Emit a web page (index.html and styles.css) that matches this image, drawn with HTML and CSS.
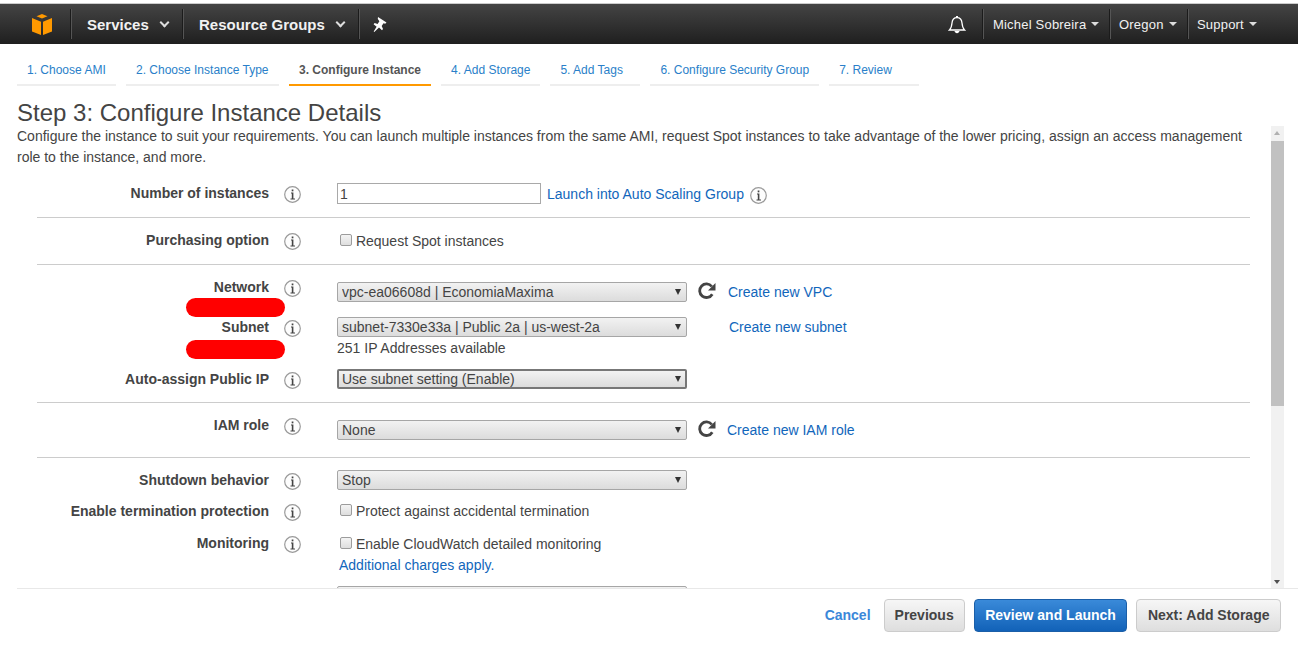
FILE: index.html
```html
<!DOCTYPE html>
<html>
<head>
    <title>Launch Instance Wizard</title>
    <link rel="stylesheet" href="styles.css">
</head>
<body>
    <header class="topbar">
        <div class="nav-item logo">
            <svg width="20" height="21" viewBox="0 0 20 21">
                <path fill="#f90" d="M10 0l5.500 2.300L10 4.600 4.500 2.300z"/>
                <path fill="#f90" d="M0 4l9 3.700V21l-9-3.600z"/>
                <path fill="#f90" d="M20 4l-9 3.700V21l9-3.600z"/>
            </svg>
        </div>
        <div class="nav-item services">Services <span class="chev"></span></div>
        <div class="nav-item groups">Resource Groups <span class="chev"></span></div>
        <div class="nav-item pin">
            <svg width="14" height="15" viewBox="0 0 14 15">
                <path fill="#fff" d="M5 0l8.500 5.500-1.300 1.200-1.700-.4-1.800 2.800 1.300 3-1 1.100-3-2.800L1.300 15 .7 14.400l2.900-4.600-3-2.500 1-1.200 3 .8 1.800-2.600-1.600-2.300z"/>
            </svg>
        </div>
        <div class="nav-right">
            <div class="bell">
                <svg width="18" height="19" viewBox="0 0 18 19">
                    <path fill="none" stroke="#fff" stroke-width="1.300" d="M1.500 15c2-2 2.200-3.500 2.500-7 .3-3.500 2.300-5.300 5-5.300s4.700 1.800 5 5.300c.3 3.500.5 5 2.500 7z"/>
                    <path fill="#fff" d="M6.500 16h5c-.3 1.400-1.200 2.200-2.500 2.200s-2.200-.8-2.500-2.200zM8 1h2v2H8z"/>
                </svg>
            </div>
            <div class="menu user">Michel Sobreira <span class="caret"></span></div>
            <div class="menu region">Oregon <span class="caret"></span></div>
            <div class="menu support">Support <span class="caret"></span></div>
        </div>
    </header>

    <nav class="tabs">
        <a class="tab">1. Choose AMI</a>
        <a class="tab">2. Choose Instance Type</a>
        <a class="tab active">3. Configure Instance</a>
        <a class="tab">4. Add Storage</a>
        <a class="tab">5. Add Tags</a>
        <a class="tab">6. Configure Security Group</a>
        <a class="tab">7. Review</a>
    </nav>

    <h1 class="title">Step 3: Configure Instance Details</h1>

    <div class="pane">
        <main class="form">
            <p class="intro">Configure the instance to suit your requirements. You can launch multiple instances from the same AMI, request Spot instances to take advantage of the lower pricing, assign an access management role to the instance, and more.</p>

            <section class="section s-count">
                <div class="row">
                    <label class="label">Number of instances</label>
                    <svg class="info"><use href="#i"/></svg>
                    <div class="field inline">
                        <input class="text" type="text" value="1">
                        <a class="link">Launch into Auto Scaling Group</a>
                        <svg class="info after"><use href="#i"/></svg>
                    </div>
                </div>
            </section>

            <section class="section s-spot">
                <div class="row">
                    <label class="label">Purchasing option</label>
                    <svg class="info"><use href="#i"/></svg>
                    <div class="field"><span class="check"><input type="checkbox"> Request Spot instances</span></div>
                </div>
            </section>

            <section class="section s-net">
                <div class="row r-network">
                    <label class="label">Network</label>
                    <svg class="info"><use href="#i"/></svg>
                    <div class="field inline">
                        <div class="select"><select><option>vpc-ea06608d | EconomiaMaxima</option></select></div>
                        <svg class="refresh"><use href="#r"/></svg>
                        <a class="link">Create new VPC</a>
                    </div>
                    <span class="blot"></span>
                </div>
                <div class="row r-subnet">
                    <label class="label">Subnet</label>
                    <svg class="info"><use href="#i"/></svg>
                    <div class="field">
                        <div class="inline">
                            <div class="select"><select><option>subnet-7330e33a | Public 2a | us-west-2a</option></select></div>
                            <a class="link subnet-link">Create new subnet</a>
                        </div>
                        <div class="note">251 IP Addresses available</div>
                    </div>
                    <span class="blot"></span>
                </div>
                <div class="row r-public">
                    <label class="label">Auto-assign Public IP</label>
                    <svg class="info"><use href="#i"/></svg>
                    <div class="field"><div class="select focus"><select><option>Use subnet setting (Enable)</option></select></div></div>
                </div>
            </section>

            <section class="section s-iam">
                <div class="row r-iam">
                    <label class="label">IAM role</label>
                    <svg class="info"><use href="#i"/></svg>
                    <div class="field inline">
                        <div class="select"><select><option>None</option></select></div>
                        <svg class="refresh"><use href="#r"/></svg>
                        <a class="link iam-link">Create new IAM role</a>
                    </div>
                </div>
            </section>

            <section class="section s-last">
                <div class="row r-shutdown">
                    <label class="label">Shutdown behavior</label>
                    <svg class="info"><use href="#i"/></svg>
                    <div class="field"><div class="select"><select><option>Stop</option></select></div></div>
                </div>
                <div class="row r-protect">
                    <label class="label">Enable termination protection</label>
                    <svg class="info"><use href="#i"/></svg>
                    <div class="field"><span class="check"><input type="checkbox"> Protect against accidental termination</span></div>
                </div>
                <div class="row r-monitor">
                    <label class="label">Monitoring</label>
                    <svg class="info"><use href="#i"/></svg>
                    <div class="field">
                        <span class="check"><input type="checkbox"> Enable CloudWatch detailed monitoring</span>
                        <a class="link charges">Additional charges apply.</a>
                    </div>
                </div>
                <div class="row r-next">
                    <div class="field next"><div class="select"><select><option>Shared - Run a shared hardware instance</option></select></div></div>
                </div>
            </section>
        </main>
        <div class="scrollbar">
            <span class="arrow up"></span>
            <span class="thumb"></span>
            <span class="arrow down"></span>
        </div>
    </div>

    <footer class="footer">
        <a class="cancel">Cancel</a>
        <button class="btn">Previous</button>
        <button class="btn primary">Review and Launch</button>
        <button class="btn">Next: Add Storage</button>
    </footer>

    <svg class="defs" width="0" height="0">
        <symbol id="i" viewBox="0 0 17 17">
            <circle cx="8.500" cy="8.500" r="7.800" fill="#fdfdfd" stroke="#9a9a9a" stroke-width="1.200"/>
            <rect x="7.700" y="3.500" width="1.700" height="1.800" fill="#444"/>
            <path fill="#444" d="M7 6.500h2.400v6H11v1H6.500v-1h1.300v-5H7z"/>
        </symbol>
        <symbol id="r" viewBox="0 0 18 18">
            <path fill="none" stroke="#444" stroke-width="2.800" d="M14.300 12.200A6.800 6.800 0 1 1 13.800 4.500"/>
            <path fill="#444" d="M17.500 1v7.500H10z"/>
        </symbol>
    </svg>
</body>
</html>
```

FILE: styles.css
```css
* {
    box-sizing: border-box;
}

body {
    margin: 0;
    height: 651px;
    overflow: hidden;
    background: #fff;
    font-family: "Liberation Sans", Arial, sans-serif;
    font-size: 14px;
    color: #444;
}

.defs {
    position: absolute;
}

/* top bar */
.topbar {
    display: flex;
    align-items: center;
    height: 41px;
    margin-top: 3px;
    border-top: 1px solid #ccc;
    background: linear-gradient(#444, #1f1f1f);
    color: #f1f1f1;
}

.nav-item {
    display: flex;
    align-items: center;
    height: 30px;
    font-size: 15px;
    font-weight: bold;
    border-right: 1px solid #1b1b1b;
    box-shadow: 1px 0 0 #555;
}

.logo {
    width: 71px;
    padding-left: 32px;
}

.services {
    width: 112px;
    padding-left: 16px;
}

.groups {
    width: 176px;
    padding-left: 16px;
}

.pin {
    border: 0;
    box-shadow: none;
    padding-left: 14px;
}

.chev {
    width: 7px;
    height: 7px;
    margin: -3px 0 0 12px;
    border-right: 2px solid #ddd;
    border-bottom: 2px solid #ddd;
    transform: rotate(45deg);
}

.nav-right {
    display: flex;
    align-items: center;
    margin-left: auto;
    height: 30px;
}

.bell {
    width: 34px;
    height: 19px;
}

.menu {
    display: flex;
    align-items: center;
    height: 30px;
    padding-left: 9px;
    font-size: 13px;
    letter-spacing: 0.2px;
    border-left: 1px solid #1b1b1b;
    box-shadow: inset 1px 0 0 #555;
}

.user {
    width: 127px;
    padding-left: 10px;
}

.region {
    width: 78px;
}

.support {
    width: 111px;
}

.caret {
    width: 0;
    height: 0;
    margin-left: 5px;
    border-left: 4px solid transparent;
    border-right: 4px solid transparent;
    border-top: 4px solid #ddd;
}

/* wizard tabs */
.tabs {
    display: flex;
    gap: 10px;
    height: 42px;
    padding: 15px 0 0 17px;
}

.tab {
    height: 27px;
    padding: 4px 10px 0;
    border-bottom: 2px solid #eee;
    color: #2a7fc9;
    font-size: 12px;
    white-space: nowrap;
}

.tab:first-child {
    min-width: 99px;
}

.tab:nth-child(2) {
    min-width: 153px;
}

.tab:nth-child(5),
.tab:nth-child(7) {
    min-width: 90px;
}

.tab.active {
    border-bottom-color: #f90;
    color: #555;
    font-weight: bold;
}

.title {
    margin: 12px 0 0 17px;
    height: 28px;
    font-size: 24px;
    font-weight: normal;
    line-height: 30px;
    color: #444;
}

/* scrolling part */
.pane {
    display: flex;
    height: 462px;
    margin-left: 17px;
    overflow: hidden;
}

.form {
    width: 1254px;
}

.intro {
    width: 1232px;
    margin: 0;
    height: 39px;
    line-height: 21px;
}

.section {
    margin: 0 21px 0 20px;
    border-bottom: 1px solid #ccc;
}

.s-count {
    height: 53px;
    padding-top: 18px;
}

.s-spot {
    height: 47px;
    padding-top: 12px;
}

.s-net {
    height: 138px;
    padding-top: 17px;
}

.s-iam {
    height: 55px;
    padding-top: 17px;
}

.s-last {
    border: 0;
    padding-top: 12px;
}

.row {
    position: relative;
    display: grid;
    grid-template-columns: 232px 68px 1fr;
    align-items: start;
}

.label {
    padding-top: 2px;
    text-align: right;
    font-weight: bold;
    line-height: 16px;
}

.info {
    width: 17px;
    height: 17px;
    margin: 3px 0 0 15px;
}

.info.after {
    margin: 3px 0 0 6px;
}

.inline {
    display: flex;
    align-items: center;
}

.text {
    width: 204px;
    height: 21px;
    padding: 0 2px;
    border: 1px solid #a9a9a9;
    font: 14px "Liberation Sans", Arial, sans-serif;
    color: #444;
}

.link {
    color: #1166bb;
    cursor: pointer;
}

.text + .link {
    margin-left: 6px;
}

.select {
    position: relative;
    flex: none;
    width: 350px;
    height: 20px;
}

.select select {
    display: block;
    width: 100%;
    height: 100%;
    padding: 0 0 0 4px;
    appearance: none;
    border: 1px solid #a6a6a6;
    border-radius: 2px;
    background: linear-gradient(#f2f2f2, #dcdcdc);
    font: 14px "Liberation Sans", Arial, sans-serif;
    color: #444;
}

.select::after {
    content: "";
    position: absolute;
    right: 6px;
    top: 7px;
    border-left: 3.500px solid transparent;
    border-right: 3.500px solid transparent;
    border-top: 6px solid #333;
}

.select.focus select {
    border: 2px solid #777;
    padding-left: 3px;
}

.refresh {
    flex: none;
    width: 18px;
    height: 18px;
    margin: 0 12px 2px 11px;
}

.subnet-link {
    margin-left: 42px;
}

.iam-link {
    margin-left: -1px;
}

.note {
    margin-top: 2px;
    line-height: 18px;
}

.check {
    display: block;
    margin-left: 3px;
    line-height: 18px;
}

.s-spot .check {
    margin-top: 2px;
}

.check input {
    width: 12px;
    height: 12px;
    margin: 0 0 5px 0;
    appearance: none;
    vertical-align: middle;
    border: 1px solid #9c9c9c;
    border-radius: 2px;
    background: linear-gradient(#f4f4f4, #dedede);
}

.charges {
    display: block;
    margin: 2px 0 0 2px;
    line-height: 18px;
}

.r-network .label,
.r-iam .label {
    margin-top: -5px;
}

.r-network .info,
.r-iam .info {
    margin-top: -2px;
}

.r-subnet {
    margin-top: 15px;
}

.r-public {
    margin-top: 12px;
}

.r-protect {
    margin-top: 11px;
}

.r-protect .check {
    padding-top: 1px;
}

.r-monitor {
    margin-top: 14px;
}

.r-monitor .label {
    margin-top: -2px;
}

.r-monitor .info {
    margin-top: 1px;
}

.r-next {
    display: block;
    margin: 12px 0 0 300px;
}

/* covers on the account ids */
.blot {
    position: absolute;
    left: 149px;
    top: 16px;
    width: 99px;
    height: 19px;
    border-radius: 10px;
    background: #f00;
}

.r-subnet .blot {
    top: 23px;
}

.scrollbar {
    position: relative;
    width: 13px;
    height: 100%;
    background: #f1f1f1;
}

.thumb {
    position: absolute;
    top: 15px;
    left: 0;
    width: 13px;
    height: 265px;
    background: #c1c1c1;
}

.arrow {
    position: absolute;
    left: 3px;
    border-left: 3.500px solid transparent;
    border-right: 3.500px solid transparent;
}

.arrow.up {
    top: 5px;
    border-bottom: 4px solid #b0b0b0;
}

.arrow.down {
    bottom: 4px;
    border-top: 4px solid #505050;
}

/* bottom buttons */
.footer {
    display: flex;
    align-items: center;
    justify-content: flex-end;
    gap: 9px;
    height: 55px;
    margin-left: 17px;
    padding: 0 17px 2px 0;
    border-top: 1px solid #e8e8e8;
}

.cancel {
    margin-right: 4px;
    color: #3b87d9;
    font-weight: bold;
}

.btn {
    height: 33px;
    padding: 0 10px;
    border: 1px solid #ccc;
    border-radius: 4px;
    background: linear-gradient(#f6f6f6, #dedede);
    font: bold 14px "Liberation Sans", Arial, sans-serif;
    color: #444;
}

.btn.primary {
    padding: 0 10.500px;
    border-color: #1b5fa8;
    background: linear-gradient(#3a8ad9, #1262b8);
    color: #fff;
}

.btn.primary + .btn {
    padding: 0 10.500px;
}
```
